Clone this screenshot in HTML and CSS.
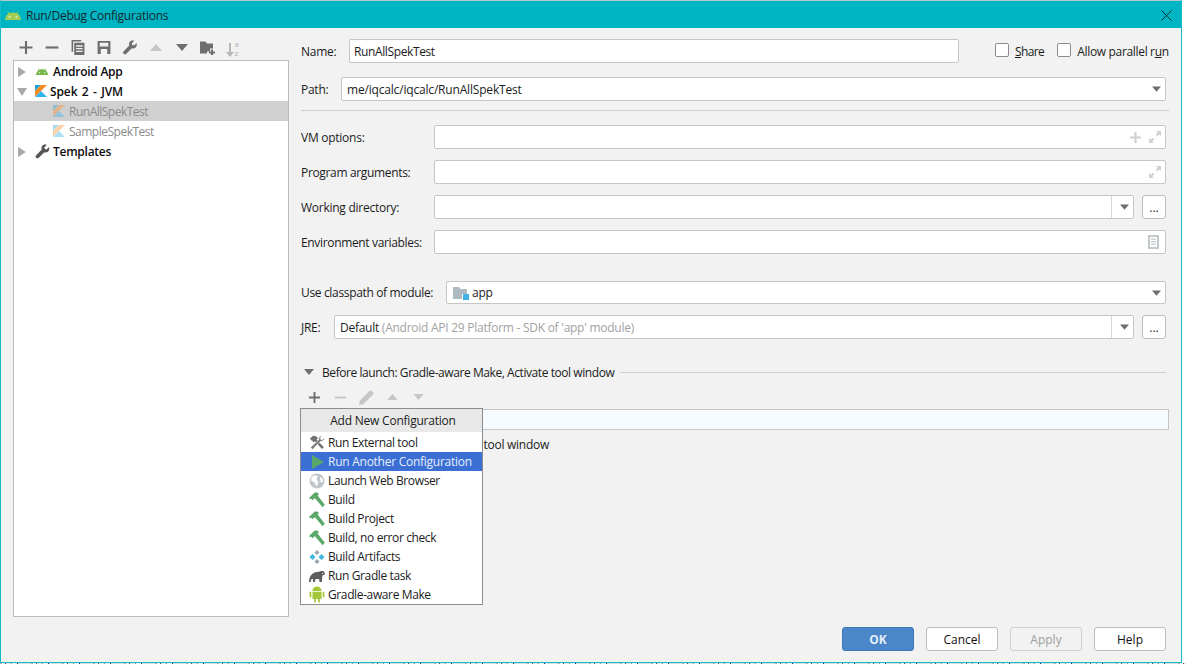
FILE: index.html
```html
<!DOCTYPE html>
<html lang="en">
<head>
<meta charset="utf-8">
<title>Run/Debug Configurations</title>
<link rel="stylesheet" href="styles.css">
</head>
<body>
<svg class="defs" width="0" height="0" aria-hidden="true">
  <symbol id="i-wrench" viewBox="0 0 16 16"><path d="M15 3.2 12.4 5.8 10.4 5.4 10 3.4 12.7 .9C10.7 0 8.6 .5 7.6 2 6.8 3.2 6.7 4.7 7.2 5.9L1.3 11.9C.5 12.7.5 13.9 1.2 14.7 2 15.5 3.2 15.5 4 14.7L10 8.7C11.3 9.3 12.9 9.1 14 8.1 15.2 7 15.6 4.9 15 3.2Z"/></symbol>
  <symbol id="i-hammer" viewBox="0 0 16 16"><path fill="#59a869" d="M0 6 5.8 .4 8.2 .4 10 2 8.6 3.4 15.8 12.8 13.6 15.2 5.8 6 3.6 8.2 2.4 6.8 1.2 7.2Z"/></symbol>
  <symbol id="i-kotlin" viewBox="0 0 12 12"><path fill="#1d9fd8" d="M0 0H6L0 6Z"/><path fill="#f58a1f" d="M6 0H12L0 12V6Z"/><path fill="#2fb4f0" d="M6 6 12 12H0Z"/></symbol>
  <symbol id="i-android-head" viewBox="0 0 16 9"><path d="M0 9C.2 6.2 1.4 3.8 3.6 2.4L2.4.4 3 0 4.3 2C6.3 1.2 9.7 1.2 11.7 2L13 0 13.6.4 12.4 2.4C14.6 3.8 15.8 6.2 16 9Z"/><circle cx="4.6" cy="5.8" r="1" fill="#e6f0c8"/><circle cx="11.4" cy="5.8" r="1" fill="#e6f0c8"/></symbol>
  <symbol id="i-expand" viewBox="0 0 12 12"><path fill="#ccd0d3" d="M7 0H12V5L10.2 3.2 8.2 5.2 6.8 3.8 8.8 1.8ZM5 12H0V7L1.8 8.8 3.8 6.8 5.2 8.2 3.2 10.2Z"/></symbol>
  <symbol id="i-up" viewBox="0 0 12 7"><path d="M6 0 12 7H0Z"/></symbol>
  <symbol id="i-down" viewBox="0 0 12 7"><path d="M0 0H12L6 7Z"/></symbol>
</svg>

<div class="window">
  <header class="titlebar">
    <svg class="title-icon"><use href="#i-android-head"/></svg>
    <span class="title-text">Run/Debug Configurations</span>
    <svg class="close" viewBox="0 0 12 12"><path d="M.5.5 11.5 11.5M11.5.5.5 11.5"/></svg>
  </header>

  <div class="main">
    <aside class="left">
      <div class="toolbar">
        <svg class="tool" viewBox="0 0 14 14"><path d="M6 1H8V6H13V8H8V13H6V8H1V6H6Z"/></svg>
        <svg class="tool" viewBox="0 0 14 14"><path d="M1 6H13V8H1Z"/></svg>
        <svg class="tool" viewBox="0 0 14 14"><path d="M1 0H10V1.5H2.5V11H1ZM3.5 2.5H13V14H3.5ZM5.2 5V6.2H11.3V5ZM5.2 7.5V8.7H11.3V7.5ZM5.2 10V11.2H11.3V10Z" fill-rule="evenodd"/></svg>
        <svg class="tool" viewBox="0 0 14 14"><path d="M1 1H13V13H1ZM3 2.5V6H11V2.5ZM4 8.5V13H10V8.5Z" fill-rule="evenodd"/></svg>
        <svg class="tool"><use href="#i-wrench"/></svg>
        <svg class="tool tool-off tri"><use href="#i-up"/></svg>
        <svg class="tool tri"><use href="#i-down"/></svg>
        <svg class="tool" viewBox="0 0 16 14"><path d="M0 1H5.5L7 3H13V8H10V11H7V13H0Z"/><path d="M11 9H13V11H15V13H13V14.5H11V13H9V11H11Z"/></svg>
        <svg class="tool tool-sort" viewBox="0 -2 16 20"><path d="M3 3H5V12H8L4 17 0 12H3Z"/><text x="8.5" y="7.3" class="sort-a">a</text><text x="8.5" y="16.3" class="sort-a">z</text></svg>
      </div>
      <div class="tree">
        <div class="node bold"><span class="arrow arrow-r"></span><svg class="ic-android"><use href="#i-android-head"/></svg><span>Android App</span></div>
        <div class="node bold open"><span class="arrow arrow-d"></span><svg class="ic-kotlin"><use href="#i-kotlin"/></svg><span>Spek 2 - JVM</span></div>
        <div class="node child selected"><svg class="ic-kotlin faded"><use href="#i-kotlin"/></svg><span>RunAllSpekTest</span></div>
        <div class="node child"><svg class="ic-kotlin faded"><use href="#i-kotlin"/></svg><span>SampleSpekTest</span></div>
        <div class="node bold"><span class="arrow arrow-r"></span><svg class="ic-wrench"><use href="#i-wrench"/></svg><span>Templates</span></div>
      </div>
    </aside>

    <section class="right">
      <div class="row row-name">
        <label class="lbl lbl-name">Name:</label>
        <div class="field field-name">RunAllSpekTest</div>
        <span class="check"></span><span class="check-text check-share"><u>S</u>hare</span>
        <span class="check check-2"></span><span class="check-text">Allow parallel r<u>u</u>n</span>
      </div>
      <div class="row row-path">
        <label class="lbl lbl-path">Path:</label>
        <div class="field grow path-text">me/iqcalc/iqcalc/RunAllSpekTest<svg class="caret"><use href="#i-down"/></svg></div>
      </div>
      <hr class="sep">
      <div class="row row-vm">
        <label class="lbl lbl-wide">VM options:</label>
        <div class="field grow"><svg class="plus" viewBox="0 0 10 10"><path d="M4 0H6V4H10V6H6V10H4V6H0V4H4Z"/></svg><svg class="expand"><use href="#i-expand"/></svg></div>
      </div>
      <div class="row row-gap">
        <label class="lbl lbl-wide tight">Program arguments:</label>
        <div class="field grow"><svg class="expand"><use href="#i-expand"/></svg></div>
      </div>
      <div class="row row-gap">
        <label class="lbl lbl-wide">Working directory:</label>
        <div class="field grow"><span class="combo-split"><svg class="caret"><use href="#i-down"/></svg></span></div>
        <button class="dots">...</button>
      </div>
      <div class="row row-gap">
        <label class="lbl lbl-wide tight">Environment variables:</label>
        <div class="field grow"><svg class="doc" viewBox="0 0 11 14"><path d="M0 0H11V14H0ZM2 2V12H9V2ZM3 3.5H8V4.7H3ZM3 6H8V7.2H3ZM3 8.5H8V9.7H3Z" fill-rule="evenodd"/></svg></div>
      </div>
      <div class="row row-module">
        <label class="lbl lbl-module tight">Use classpath of module:</label>
        <div class="field grow"><svg class="folder" viewBox="0 0 16 14"><path fill="#aebac2" d="M0 1H6L7.5 3H14V8H9V13H0Z"/><rect x="10" y="8" width="6" height="6" fill="#3fb3e6"/></svg>app<svg class="caret"><use href="#i-down"/></svg></div>
      </div>
      <div class="row row-jre">
        <label class="lbl lbl-jre">JRE:</label>
        <div class="field grow jre-field">Default&nbsp;<span class="muted">(Android API 29 Platform - SDK of 'app' module)</span><span class="combo-split"><svg class="caret"><use href="#i-down"/></svg></span></div>
        <button class="dots">...</button>
      </div>
      <div class="before">
        <svg class="before-tri"><use href="#i-down"/></svg>
        <span class="before-text">Before launch: Gradle-aware Make, Activate tool window</span>
        <span class="before-line"></span>
      </div>
      <div class="small-tools">
        <svg class="stool dark" viewBox="0 0 14 14"><path d="M6 1H8V6H13V8H8V13H6V8H1V6H6Z"/></svg>
        <svg class="stool" viewBox="0 0 14 14"><path d="M1 6H13V8H1Z"/></svg>
        <svg class="stool stool-pen" viewBox="0 0 14 14"><path d="M0 14 .8 10 9.5 1.2C10.3.4 11.3.4 12 1L13 2C13.6 2.7 13.6 3.7 12.8 4.5L4 13.2Z"/></svg>
        <svg class="stool tri"><use href="#i-up"/></svg>
        <svg class="stool tri"><use href="#i-down"/></svg>
      </div>
      <div class="task-list"></div>
      <div class="activate">Activate tool window</div>

      <div class="popup">
        <div class="popup-head">Add New Configuration</div>
        <ul class="popup-list">
          <li><svg class="pi" viewBox="0 0 16 16"><path fill="#707070" d="M1 3.5 4 .8 7 1.2 9 3 7.6 4.4 14.8 12.2 13 14 5.8 6.2 4.4 7.4 3.4 5.8 2.4 5.6Z"/><path fill="#707070" d="M15.4 2.8 13.4 4.8 11.8 4.4 11.4 2.8 13.2 1C11.4.6 10 1.6 9.8 3.4L10 4.6 1.6 12.6 3.4 14.4 11.4 6.2C13.4 6.6 15.6 5.2 15.4 2.8Z" stroke="#fff" stroke-width=".6"/></svg>Run External tool</li>
          <li class="active"><svg class="pi" viewBox="0 0 16 16"><path fill="#59a869" d="M3 1 15 8 3 15Z"/></svg>Run Another Configuration</li>
          <li><svg class="pi" viewBox="0 0 16 16"><circle cx="8" cy="8" r="7.5" fill="#bfc7cc"/><path fill="#fff" d="M2.5 4 6.5 2 9 3.5 7.5 6.5 9.5 9 7.5 13.5 5.5 9.5 2 7.5ZM11 4 13.5 5.5 14 9 11.5 9.5Z"/></svg>Launch Web Browser</li>
          <li><svg class="pi"><use href="#i-hammer"/></svg>Build</li>
          <li><svg class="pi"><use href="#i-hammer"/></svg>Build Project</li>
          <li><svg class="pi"><use href="#i-hammer"/></svg>Build, no error check</li>
          <li><svg class="pi" viewBox="0 0 16 16"><path fill="#9aa7b0" d="M8 1 10.5 3.5 8 6 5.5 3.5ZM8 10 10.5 12.5 8 15 5.5 12.5Z"/><path fill="#40b6e0" d="M3.5 5 6.5 8 3.5 11 .5 8ZM12.5 5 15.5 8 12.5 11 9.5 8Z"/></svg>Build Artifacts</li>
          <li><svg class="pi" viewBox="0 0 16 16"><path fill="#5d5d5d" d="M0 14C0 8.5 3 4.5 8 4 11 3.6 12 2.6 14 3 15.5 3.4 16 5 15.7 6.8L13.4 7.4 12.8 14H10.6L10 11 6.5 11 6 14H4V11L2 11.6 1.8 14Z"/><path fill="#fff" d="M13 4.8h1v1h-1Z"/></svg>Run Gradle task</li>
          <li><svg class="pi pi-droid" viewBox="1 1 14 15"><path fill="#a4c639" d="M4 5.5C4 3 6 1.5 8 1.5S12 3 12 5.5ZM4 6H12V12.5H10.5V15.5H9V12.5H7V15.5H5.5V12.5H4ZM1.5 6H3V11H1.5ZM13 6H14.5V11H13Z"/></svg>Gradle-aware Make</li>
        </ul>
      </div>
    </section>
  </div>

  <footer class="footer">
    <button class="btn btn-ok">OK</button>
    <button class="btn">Cancel</button>
    <button class="btn btn-off">Apply</button>
    <button class="btn">Help</button>
  </footer>
</div>
<div class="desktop-strip"></div>
</body>
</html>
```
FILE: styles.css
```css
* { box-sizing: border-box; }
html, body { margin: 0; padding: 0; background: #fff; overflow: hidden; }
body { width: 1186px; height: 664px; font: 12px "Open Sans", "Noto Sans", sans-serif; color: #111; letter-spacing: -0.26px; }
.defs { position: absolute; }

.window { width: 1182px; height: 663px; border: 1px solid #14bccb; border-top-color: #b5c9cb; background: #f2f2f2; display: flex; flex-direction: column; }

.titlebar { height: 27px; flex: none; background: #00b5c3; display: flex; align-items: center; padding-left: 4px; }
.title-icon { width: 16px; height: 9px; fill: #a3cc52; flex: none; margin-top: 1px; }
.title-text { margin-left: 5px; font-size: 12px; color: #10282c; margin-top: 1px; }
.close { width: 11px; height: 11px; margin-left: auto; margin-right: 9px; margin-top: 1px; fill: none; stroke: #10282c; stroke-width: 1; flex: none; }

.main { flex: 1; display: flex; position: relative; min-height: 0; }

.left { width: 276px; margin-left: 12px; display: flex; flex-direction: column; flex: none; }
.toolbar { height: 32px; flex: none; display: flex; align-items: center; padding: 7px 0 0 5px; gap: 10px; }
.tool { width: 16px; height: 15px; fill: #6e6e6e; flex: none; }
.tool.tri { height: 7px; width: 16px; }
.tool-off { fill: #c6c6c6; }
.tool-sort { fill: #b4b8bb; height: 20px; }
.sort-a { font-size: 8px; fill: #a9aeb2; letter-spacing: 0; }

.tree { flex: 1; background: #fff; border: 1px solid #bcbcbc; }
.node { height: 20px; display: flex; align-items: center; position: relative; padding-left: 38px; }
.node.open { padding-left: 37px; word-spacing: 1.4px; letter-spacing: -0.1px; }
.node.child { padding-left: 55px; color: #8b8b8b; letter-spacing: -0.5px; }
.node.bold { font-weight: 600; color: #0c0c0c; }
.selected { background: #d0d0d0; }
.arrow { position: absolute; left: 4px; top: 6px; width: 0; height: 0; border-style: solid; }
.arrow-r { left: 4px; border-width: 5px 0 5px 8px; border-color: transparent transparent transparent #a9a9a9; }
.arrow-d { left: 3px; top: 7px; border-width: 8px 5px 0 5px; border-color: #a9a9a9 transparent transparent transparent; }
.ic-android { width: 12px; height: 7px; fill: #78b84f; margin: 0 5px 0 -16px; flex: none; }
.ic-kotlin { width: 12px; height: 12px; flex: none; margin: 0 3px 0 -16px; }
.child .ic-kotlin { margin-right: 4px; margin-left: -16px; }
.faded { opacity: .38; }
.ic-wrench { width: 15px; height: 15px; fill: #555; flex: none; margin: 0 3px 0 -17px; }

.right { width: 868px; margin-left: 12px; flex: none; padding-top: 11px; position: relative; }
.row { display: flex; align-items: center; height: 24px; margin-right: 3px; }
.lbl { flex: none; color: #1c1c1c; }
.tight { letter-spacing: -0.34px; }
.lbl-name { width: 48px; }
.lbl-path { width: 40px; }
.lbl-wide { width: 133px; }
.lbl-module { width: 145px; }
.lbl-jre { width: 33px; }
.field { height: 24px; background: #fff; border: 1px solid #c6c6c6; border-radius: 2px; display: flex; align-items: center; padding-left: 4px; position: relative; white-space: nowrap; color: #1c1c1c; }
.grow { flex: 1; }
.field-name { width: 610px; flex: none; margin-right: 36px; letter-spacing: -0.38px; }
.path-text { padding-left: 5px; letter-spacing: -0.18px; }
.jre-field { padding-left: 5px; }
.check { width: 14px; height: 14px; flex: none; background: #fff; border: 1px solid #8c8c8c; border-radius: 2px; margin: 0 6px 2px 0; }
.check-2 { margin-left: 13px; }
.check-text { color: #1c1c1c; white-space: nowrap; letter-spacing: -0.33px; }
.check-share { letter-spacing: -0.6px; }
.row-path { margin-top: 14px; }
.sep { height: 1px; border: 0; background: #cfcfcf; margin: 9px 0 0; }
.row-vm { margin-top: 14px; }
.row-gap { margin-top: 11px; }
.row-module { margin-top: 27px; height: 23px; }
.row-module .field { height: 23px; padding-left: 6px; }
.row-jre { margin-top: 11px; }
.muted { color: #a2a2a2; }

.caret { position: absolute; right: 4px; top: 8px; width: 9px; height: 6px; fill: #6e6e6e; }
.plus { position: absolute; right: 24px; top: 6px; width: 11px; height: 11px; fill: #ccd0d3; }
.expand { position: absolute; right: 4px; top: 5px; width: 12px; height: 12px; }
.doc { position: absolute; right: 6px; top: 4px; width: 11px; height: 14px; fill: #c3c8cb; }
.folder { width: 16px; height: 14px; margin-right: 3px; flex: none; }
.combo-split { position: absolute; right: 0; top: 0; bottom: 0; width: 22px; border-left: 1px solid #d6d6d6; }
.dots { width: 24px; height: 24px; margin-left: 8px; flex: none; background: #fff; border: 1px solid #bdbdbd; border-radius: 3px; font: inherit; padding: 0; color: #222; }

.before { display: flex; align-items: center; height: 16px; margin-top: 25px; padding-left: 3px; color: #1c1c1c; margin-right: 3px; }
.before-text { letter-spacing: -0.43px; }
.before-tri { width: 10px; height: 6px; fill: #6e6e6e; margin-right: 8px; flex: none; }
.before-line { flex: 1; height: 1px; background: #cfcfcf; margin-left: 6px; }
.small-tools { height: 18px; margin-top: 8px; display: flex; align-items: center; padding-left: 7px; gap: 13px; }
.stool { width: 13px; height: 13px; fill: #c6c6c6; flex: none; }
.stool-pen { width: 15px; height: 15px; margin: 0 -1px; }
.stool.dark { fill: #6e6e6e; }
.stool.tri { height: 6px; fill: #c6c6c6; }
.task-list { height: 21px; margin-top: 3px; background: #f6fbff; border: 1px solid #c6c6c6; }
.activate { height: 20px; margin-top: 5px; width: 248px; text-align: right; line-height: 20px; color: #1c1c1c; }

.popup { position: absolute; left: -1px; top: 380px; width: 183px; height: 197px; background: #fff; border: 1px solid #8c8c8c; }
.popup-head { height: 23px; padding-left: 3px; background: #e8e8e8; text-align: center; line-height: 23px; color: #1c1c1c; letter-spacing: -0.22px; }
.popup-list { list-style: none; margin: 0; padding: 1px 0 0; }
.popup-list li { height: 19px; display: flex; align-items: center; padding-left: 8px; color: #1c1c1c; white-space: nowrap; letter-spacing: -0.38px; }
.popup-list li.active { background: #3b6fd4; color: #e6eefb; letter-spacing: -0.26px; }
.pi { width: 16px; height: 16px; margin-right: 3px; flex: none; }
.pi-droid { height: 17px; }

.footer { height: 45px; flex: none; display: flex; padding: 10px 15px 11px 0; justify-content: flex-end; gap: 12px; }
.btn { width: 72px; height: 24px; background: #fff; border: 1px solid #bdbdbd; border-radius: 3px; font: inherit; color: #111; padding: 0; }
.btn-ok { background: #4a86c8; border-color: #3f78b8; color: #e4eefa; font-weight: 700; }
.btn-off { background: #f2f2f2; border-color: #cfcfcf; color: #a0a0a0; }

.desktop-strip { height: 1px; width: 1186px; background: repeating-linear-gradient(90deg, #b0b0b0 0 2px, #eee 2px 5px, #555 5px 6px, #e4e4e4 6px 11px, #999 11px 12px, #eee 12px 17px, #0a3a80 17px 18px, #ddd 18px 31px); }
```
